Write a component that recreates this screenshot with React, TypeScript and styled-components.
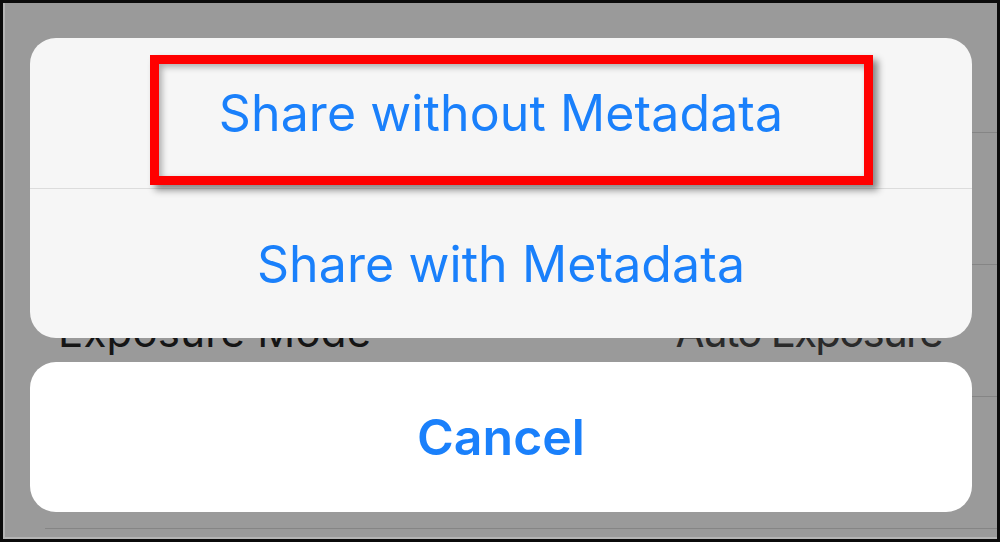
import styled, { createGlobalStyle } from 'styled-components';

const GlobalStyle = createGlobalStyle`
  html, body {
    margin: 0;
    padding: 0;
    background: #0b0b0b;
    overflow: hidden;
  }
`;

const rows = [
  { label: '', value: '' },
  { label: '', value: '' },
  { label: 'Exposure Mode', value: 'Auto Exposure' },
  { label: '', value: '' },
];

const App = () => {
  return (
    <>
      <GlobalStyle />
      <Frame>
        <SettingsList>
          {rows.map((row, i) => (
            <SettingsRow key={i}>
              <RowLabel>{row.label}</RowLabel>
              <RowValue>{row.value}</RowValue>
            </SettingsRow>
          ))}
        </SettingsList>

        <ActionSheet>
          <OptionGroup>
            <Option>Share without Metadata</Option>
            <Option>Share with Metadata</Option>
          </OptionGroup>
          <CancelButton>Cancel</CancelButton>
        </ActionSheet>

        {/* annotation drawn over the screenshot */}
        <Highlight />
      </Frame>
    </>
  );
};

const Frame = styled.div`
  position: relative;
  width: 1000px;
  height: 542px;
  box-sizing: border-box;
  border: 3px solid #0b0b0b;
  background: #9a9a9a;
  box-shadow: inset 2px 0 0 #b4b4b4, inset 0 -2px 0 #b4b4b4;
  overflow: hidden;
  font-family: 'Inter', 'Liberation Sans', sans-serif;
`;

const SettingsList = styled.div`
  display: flex;
  flex-direction: column;
  margin-top: -2px;
`;

const SettingsRow = styled.div`
  position: relative;
  display: flex;
  align-items: center;
  justify-content: space-between;
  height: 132px;
  box-sizing: border-box;
  padding: 0 55px 0 55px;
  flex-shrink: 0;

  &::after {
    content: '';
    position: absolute;
    left: 42px;
    right: 0;
    bottom: 0;
    height: 1px;
    background: #858585;
  }
`;

const RowLabel = styled.span`
  font-size: 42px;
  color: #151515;
  letter-spacing: 0.2px;
`;

const RowValue = styled.span`
  font-size: 42px;
  color: #2a2a2a;
  letter-spacing: -1.8px;
`;

const ActionSheet = styled.div`
  position: absolute;
  top: 35px;
  left: 27px;
  width: 942px;
  display: flex;
  flex-direction: column;
  gap: 24px;
`;

const OptionGroup = styled.div`
  display: flex;
  flex-direction: column;
  background: #f6f6f6;
  border-radius: 26px;
  overflow: hidden;
`;

const Option = styled.div`
  height: 150px;
  display: flex;
  align-items: center;
  justify-content: center;
  font-size: 50px;
  color: #1a80fb;
  letter-spacing: 0.1px;

  & + & {
    border-top: 1px solid #dcdcdc;
    height: 149px;
  }
`;

const CancelButton = styled.div`
  height: 150px;
  display: flex;
  align-items: center;
  justify-content: center;
  background: #ffffff;
  border-radius: 26px;
  font-size: 50px;
  font-weight: 600;
  color: #1a80fb;
`;

const Highlight = styled.div`
  position: absolute;
  left: 147px;
  top: 52px;
  width: 723px;
  height: 130px;
  box-sizing: border-box;
  border: 9px solid #ff0000;
  box-shadow: 5px 5px 7px rgba(0, 0, 0, 0.45), inset 3px 3px 6px rgba(0, 0, 0, 0.3);
`;

export default App;
